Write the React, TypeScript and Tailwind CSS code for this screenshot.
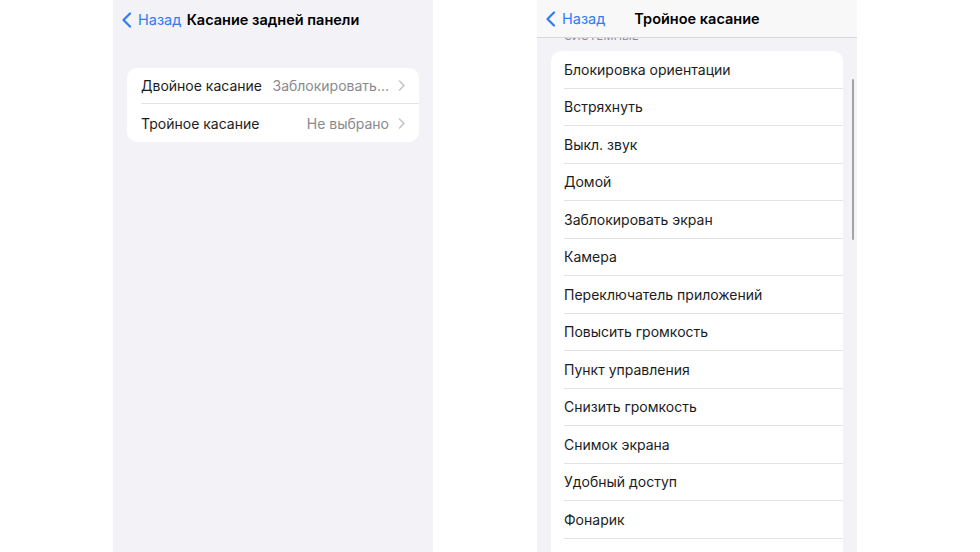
import React from "react";

const font = { fontFamily: "Inter, 'Noto Sans', sans-serif" };

const actions = [
  "Блокировка ориентации",
  "Встряхнуть",
  "Выкл. звук",
  "Домой",
  "Заблокировать экран",
  "Камера",
  "Переключатель приложений",
  "Повысить громкость",
  "Пункт управления",
  "Снизить громкость",
  "Снимок экрана",
  "Удобный доступ",
  "Фонарик",
  "Центр уведомлений",
];

function BackChevron() {
  return (
    <svg width="11" height="16" viewBox="0 0 11 16" fill="none">
      <path d="M9 1.5 2.5 8 9 14.5" stroke="#2f7cf6" strokeWidth="2.2" strokeLinecap="round" strokeLinejoin="round" />
    </svg>
  );
}

function RowChevron() {
  return (
    <svg width="7" height="11" viewBox="0 0 7 11" fill="none" className="shrink-0">
      <path d="M1.5 1 6 5.5 1.5 10" stroke="#c4c4c8" strokeWidth="1.5" strokeLinecap="round" strokeLinejoin="round" />
    </svg>
  );
}

function NavBar({ title, bg }: { title: string; bg: string }) {
  return (
    <div className={`relative h-[38px] shrink-0 flex items-center justify-center pt-[1px] ${bg}`}>
      <div className="absolute left-[8px] top-0 h-full flex items-center gap-[6px] pt-[1px]">
        <BackChevron />
        <span className="text-[14.5px] text-[#2f7cf6]">Назад</span>
      </div>
      <span className="text-[14.5px] font-semibold text-black whitespace-nowrap">{title}</span>
    </div>
  );
}

export default function App() {
  return (
    <div className="w-[980px] h-[552px] bg-white flex overflow-hidden" style={font}>
      {/* Left screen */}
      <div className="ml-[113px] w-[320px] h-full bg-[#f2f2f7] flex flex-col">
        <NavBar title="Касание задней панели" bg="bg-[#f2f2f7]" />
        <div className="mt-[30px] mx-[14px] bg-white rounded-[10px] overflow-hidden">
          <div className="h-[36px] flex items-center pl-[14px]">
            <div className="flex-1 h-full flex items-center pr-[14px] border-b border-[#e3e3e6]">
              <span className="text-[14px] text-[#1c1c1e] whitespace-nowrap">Двойное касание</span>
              <span className="ml-auto text-[14px] text-[#8a8a8e] mr-[9px] whitespace-nowrap">Заблокировать...</span>
              <RowChevron />
            </div>
          </div>
          <div className="h-[38px] flex items-center pl-[14px] pr-[14px]">
            <span className="text-[14px] text-[#1c1c1e] whitespace-nowrap">Тройное касание</span>
            <span className="ml-auto text-[14px] text-[#8a8a8e] mr-[9px] whitespace-nowrap">Не выбрано</span>
            <RowChevron />
          </div>
        </div>
      </div>

      {/* Right screen */}
      <div className="ml-[104px] w-[320px] h-full bg-[#f2f2f7] flex flex-col relative">
        <NavBar title="Тройное касание" bg="bg-[#f8f8f8] border-b border-[#d8d8dc] z-10" />
        <div className="flex-1 overflow-hidden">
          <div className="-mt-[9px] pl-[27px] text-[11px] text-[#8a8a8e] uppercase tracking-wide h-[14px] leading-[14px]">
            Системные
          </div>
          <div className="mt-[8px] ml-[14px] mr-[14px] bg-white rounded-t-[10px]">
            {actions.map((a, i) => (
              <div key={a} className="h-[37.5px] pl-[13px] flex">
                <div
                  className={`flex-1 flex items-center ${i < actions.length - 1 ? "border-b border-[#e3e3e6]" : ""}`}
                >
                  <span className="text-[14px] text-[#1c1c1e] whitespace-nowrap">{a}</span>
                </div>
              </div>
            ))}
          </div>
        </div>
        <div className="absolute right-[3px] top-[79px] w-[2.5px] h-[161px] rounded-full bg-[#a4a4a8]" />
      </div>
    </div>
  );
}
